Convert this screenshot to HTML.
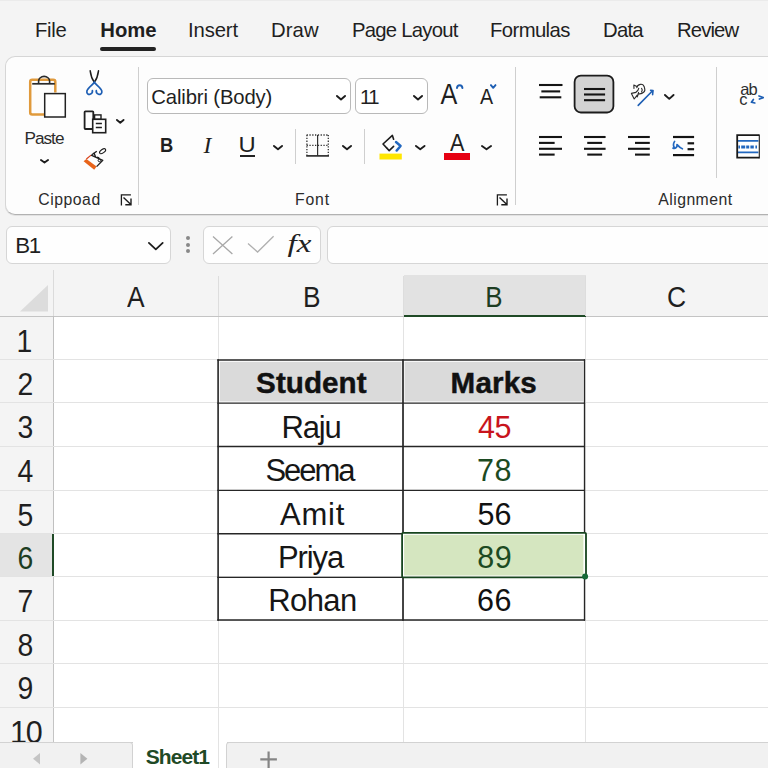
<!DOCTYPE html>
<html lang="en"><head><meta charset="utf-8"><title>Sheet</title>
<style>
html,body{margin:0;padding:0}
body{width:768px;height:768px;overflow:hidden;background:#f4f4f4;position:relative;font-family:"Liberation Sans",sans-serif;color:#1f1f1f}
.t{position:absolute;white-space:nowrap;line-height:1}
.i{position:absolute;overflow:visible}
.b{position:absolute;box-sizing:border-box}
</style></head><body>
<div class="b" style="left:0;top:0;width:768px;height:1px;background:#ebebeb"></div><div id="tabs"><span class="t" style="left:35.03px;top:20.00px;font-size:20.3px;letter-spacing:-0.282px;">File</span><span class="t" style="left:100.33px;top:20.00px;font-size:20.3px;letter-spacing:-0.018px;font-weight:700;">Home</span><span class="t" style="left:188.12px;top:20.00px;font-size:20.3px;letter-spacing:-0.144px;">Insert</span><span class="t" style="left:271.03px;top:20.00px;font-size:20.3px;letter-spacing:0.075px;">Draw</span><span class="t" style="left:352.03px;top:20.00px;font-size:20.3px;letter-spacing:-0.756px;">Page Layout</span><span class="t" style="left:490.03px;top:20.00px;font-size:20.3px;letter-spacing:-0.602px;">Formulas</span><span class="t" style="left:603.03px;top:20.00px;font-size:20.3px;letter-spacing:-0.736px;">Data</span><span class="t" style="left:677.03px;top:20.00px;font-size:20.3px;letter-spacing:-0.872px;">Review</span><div class="b" style="left:100px;top:46.5px;width:56px;height:4px;border-radius:2px;background:#222"></div></div>
<div class="b" id="ribbon" style="left:5px;top:56px;width:800px;height:158.8px;background:#fdfdfd;border:1px solid #d6d6d6;border-bottom:1px solid #b2b2b2;box-shadow:0 1px 0 #e2e2e2;border-radius:10px"></div>
<div class="b" style="left:137.5px;top:67px;width:1px;height:138px;background:#cfcfcf"></div><div class="b" style="left:514.5px;top:67px;width:1px;height:138px;background:#cfcfcf"></div><div class="b" style="left:716.0px;top:67px;width:1px;height:111px;background:#cfcfcf"></div><div class="b" style="left:295.0px;top:129px;width:1px;height:35px;background:#cfcfcf"></div><div class="b" style="left:364.0px;top:129px;width:1px;height:35px;background:#cfcfcf"></div><svg class="i" style="left:26px;top:72px" width="44" height="50" viewBox="26 72 44 50">
<path d="M44.6 114.6 H32.2 a2 2 0 0 1 -2 -2 V81.8 a2 2 0 0 1 2 -2 H53.3 a2 2 0 0 1 2 2 V92.4" fill="none" stroke="#e09a3c" stroke-width="2.5"/>
<line x1="32.2" y1="83.8" x2="54.8" y2="83.8" stroke="#2a2a2a" stroke-width="1.7"/>
<path d="M38.6 83.4 V81 a5.5 4.6 0 0 1 11 0 V83.4" fill="none" stroke="#2a2a2a" stroke-width="1.6"/>
<rect x="44.7" y="93.6" width="20.6" height="23.4" fill="#fff" stroke="#222" stroke-width="1.5"/>
</svg><span class="t" style="left:24.38px;top:130.00px;font-size:17.2px;letter-spacing:-0.961px;color:#2b2b2b;">Paste</span><svg class="i" style="left:38px;top:157px" width="13" height="8.400000000000006" viewBox="-2 -2 13 8.400000000000006"><polyline points="0.95,0.95 4.5,3.4500000000000055 8.05,0.95" fill="none" stroke="#1c1c1c" stroke-width="1.9" stroke-linecap="round" stroke-linejoin="round"/></svg><svg class="i" style="left:84px;top:68px" width="22" height="30" viewBox="84 68 22 30">
<path d="M90.2 70.8 C90.8 75.6 92.2 79.4 94.4 82.4 M98.5 70.8 C97.9 75.6 96.5 79.4 94.3 82.4" fill="none" stroke="#1c1c1c" stroke-width="1.5" stroke-linecap="round"/>
<path d="M94.2 82.2 C96.4 85.2 101 87.8 101.8 91 C102.3 93.5 100.2 94.8 98.6 94.3 C97 93.8 96 92.4 96.3 90.7" fill="none" stroke="#1e5fb4" stroke-width="1.7" stroke-linecap="round"/>
<path d="M94.5 82.2 C92.3 85.2 87.7 87.8 86.9 91 C86.4 93.5 88.5 94.8 90.1 94.3 C91.7 93.8 92.7 92.4 92.4 90.7" fill="none" stroke="#1e5fb4" stroke-width="1.7" stroke-linecap="round"/>
</svg><svg class="i" style="left:82px;top:108px" width="28" height="28" viewBox="82 108 28 28">
<rect x="84.6" y="111.3" width="8.7" height="17.7" rx="0.8" fill="none" stroke="#1f1f1f" stroke-width="1.8"/>
<rect x="94.6" y="114.9" width="6.4" height="4.4" fill="#fff" stroke="#1f1f1f" stroke-width="1.4"/>
<rect x="92.7" y="119.3" width="13" height="13.4" fill="#fff" stroke="#1f1f1f" stroke-width="1.6"/>
<path d="M95.8 123.5 H101.9 M95.8 127.5 H101.9" stroke="#1f1f1f" stroke-width="1.4"/>
</svg><svg class="i" style="left:113.5px;top:117.4px" width="12.5" height="8.599999999999994" viewBox="-2 -2 12.5 8.599999999999994"><polyline points="0.95,0.95 4.25,3.649999999999994 7.55,0.95" fill="none" stroke="#1c1c1c" stroke-width="1.9" stroke-linecap="round" stroke-linejoin="round"/></svg><svg class="i" style="left:82px;top:146px" width="28" height="26" viewBox="82 146 28 26">
<path d="M83.6 161.3 L86.4 159 L96.6 166.6 L94.2 169.7 Z" fill="#e8641a"/>
<path d="M86.4 159 L91.1 155.1" stroke="#d8401a" stroke-width="1.2" fill="none"/>
<path d="M91.1 155.1 L102.8 160.3 L96.6 166.6" stroke="#1f1f1f" stroke-width="1.3" fill="none" stroke-linejoin="round"/>
<path d="M91.8 154.8 L96.8 151.2 M93.8 152.6 L95.6 157 M97 157.2 L99.2 158" stroke="#1f1f1f" stroke-width="1.4" fill="none"/>
<circle cx="99.4" cy="160.4" r="1.3" fill="none" stroke="#1f1f1f" stroke-width="1"/>
<ellipse cx="102.6" cy="151.2" rx="3.5" ry="1.7" transform="rotate(-35 102.6 151.2)" fill="none" stroke="#1f1f1f" stroke-width="1.1"/>
</svg><span class="t" style="left:38.21px;top:192.00px;font-size:15.8px;letter-spacing:0.520px;color:#2b2b2b;">Cippoad</span><svg class="i" style="left:120px;top:194px" width="13" height="13" viewBox="0 0 13 13"><path d="M1.4 11.5 V0.8 H10.9" fill="none" stroke="#1c1c1c" stroke-width="1.3"/><path d="M3.5 3.4 L10.6 10.2 M11 4.5 V10.8 H5.3" fill="none" stroke="#1c1c1c" stroke-width="1.4"/></svg><svg class="i" style="left:496.4px;top:194px" width="13" height="13" viewBox="0 0 13 13"><path d="M1.4 11.5 V0.8 H10.9" fill="none" stroke="#1c1c1c" stroke-width="1.3"/><path d="M3.5 3.4 L10.6 10.2 M11 4.5 V10.8 H5.3" fill="none" stroke="#1c1c1c" stroke-width="1.4"/></svg><div class="b" style="left:146.5px;top:78px;width:204px;height:36px;border:1px solid #b9b9b9;border-radius:6px;background:#fff"></div><span class="t" style="left:151.29px;top:87.00px;font-size:20.3px;letter-spacing:-0.141px;">Calibri (Body)</span><svg class="i" style="left:334px;top:92.5px" width="14" height="9.5" viewBox="-2 -2 14 9.5"><polyline points="0.95,0.95 5.0,4.55 9.05,0.95" fill="none" stroke="#1c1c1c" stroke-width="1.9" stroke-linecap="round" stroke-linejoin="round"/></svg><div class="b" style="left:355px;top:78px;width:73px;height:36px;border:1px solid #b9b9b9;border-radius:6px;background:#fff"></div><span class="t" style="left:360.08px;top:87.00px;font-size:20.3px;letter-spacing:-1.575px;">11</span><svg class="i" style="left:410.5px;top:92.5px" width="14.0" height="9.5" viewBox="-2 -2 14.0 9.5"><polyline points="0.95,0.95 5.0,4.55 9.05,0.95" fill="none" stroke="#1c1c1c" stroke-width="1.9" stroke-linecap="round" stroke-linejoin="round"/></svg><span class="t" style="left:438.64px;top:79.00px;font-size:30px;transform:scaleX(0.840);transform-origin:10.01px 50%;">A</span><svg class="i" style="left:454px;top:81px" width="12" height="10" viewBox="454 81 12 10"><path d="M457 88 C457.2 84.2 462.2 84.2 462.4 88" fill="none" stroke="#1e5fb4" stroke-width="2" stroke-linecap="round"/></svg><span class="t" style="left:478.86px;top:86.00px;font-size:22.6px;transform:scaleX(0.868);transform-origin:7.54px 50%;">A</span><svg class="i" style="left:488px;top:81px" width="12" height="10" viewBox="488 81 12 10"><path d="M490.9 85.1 L493.2 87.8 L495.5 85.1" fill="none" stroke="#1e5fb4" stroke-width="1.9" stroke-linecap="round" stroke-linejoin="round"/></svg><span class="t" style="left:159.28px;top:134.00px;font-size:21px;font-weight:700;transform:scaleX(0.874);transform-origin:7.82px 50%;">B</span><span class="t" style="left:203.51px;top:134.00px;font-size:23.6px;font-style:italic;font-family:'Liberation Serif', serif;">I</span><span class="t" style="left:239.43px;top:134.00px;font-size:22.2px;transform:scaleX(1.072);transform-origin:8.02px 50%;">U</span><div class="b" style="left:240px;top:155.3px;width:14.8px;height:1.7px;background:#222"></div><svg class="i" style="left:271px;top:143.4px" width="14" height="9.199999999999989" viewBox="-2 -2 14 9.199999999999989"><polyline points="0.95,0.95 5.0,4.2499999999999885 9.05,0.95" fill="none" stroke="#1c1c1c" stroke-width="1.9" stroke-linecap="round" stroke-linejoin="round"/></svg><svg class="i" style="left:305px;top:133px" width="26" height="26" viewBox="305 133 26 26">
<path d="M306.6 135 H328.6 M306.9 135 V155.5 M328.3 135 V155.5 M306.6 145.4 H328.6" fill="none" stroke="#333" stroke-width="1.3" stroke-dasharray="1.3 1.5"/>
<path d="M317.6 135 V155.5" stroke="#333" stroke-width="1.2"/>
<path d="M306.2 155.9 H329" stroke="#222" stroke-width="1.6"/>
</svg><svg class="i" style="left:340px;top:143.4px" width="14" height="9.199999999999989" viewBox="-2 -2 14 9.199999999999989"><polyline points="0.95,0.95 5.0,4.2499999999999885 9.05,0.95" fill="none" stroke="#1c1c1c" stroke-width="1.9" stroke-linecap="round" stroke-linejoin="round"/></svg><svg class="i" style="left:378px;top:132px" width="26" height="30" viewBox="378 132 26 30">
<path d="M393.6 139.2 L392.4 135.4 L383 144 L389.2 150.6 L393.6 146.4" fill="none" stroke="#1c1c1c" stroke-width="1.6" stroke-linejoin="round" stroke-linecap="round"/>
<path d="M386.2 147.4 L387.6 148.6" stroke="#222" stroke-width="1.2"/>
<path d="M396 142 L400.6 146 L396.6 150.6" fill="none" stroke="#2268c0" stroke-width="2.4" stroke-linejoin="round" stroke-linecap="round"/>
<rect x="379.5" y="153.6" width="22.3" height="5.9" fill="#ffe600"/>
</svg><svg class="i" style="left:412.5px;top:143.4px" width="14.5" height="9.199999999999989" viewBox="-2 -2 14.5 9.199999999999989"><polyline points="0.95,0.95 5.25,4.2499999999999885 9.55,0.95" fill="none" stroke="#1c1c1c" stroke-width="1.9" stroke-linecap="round" stroke-linejoin="round"/></svg><span class="t" style="left:449.01px;top:131.00px;font-size:24.7px;transform:scaleX(0.874);transform-origin:8.24px 50%;">A</span><div class="b" style="left:444px;top:153.3px;width:25.5px;height:6.4px;background:#e60012"></div><svg class="i" style="left:479px;top:143.4px" width="15" height="9.199999999999989" viewBox="-2 -2 15 9.199999999999989"><polyline points="0.95,0.95 5.5,4.2499999999999885 10.05,0.95" fill="none" stroke="#1c1c1c" stroke-width="1.9" stroke-linecap="round" stroke-linejoin="round"/></svg><span class="t" style="left:295.00px;top:192.00px;font-size:15.8px;letter-spacing:0.841px;color:#2b2b2b;">Font</span><svg class="i" style="left:538.5px;top:82.6px" width="23.5" height="16.30000000000001" viewBox="0 0 23.5 16.30000000000001"><line x1="0.00" y1="2.00" x2="23.50" y2="2.00" stroke="#141414" stroke-width="2.1"/><line x1="2.35" y1="8.40" x2="21.15" y2="8.40" stroke="#141414" stroke-width="2.1"/><line x1="0.70" y1="14.30" x2="22.32" y2="14.30" stroke="#141414" stroke-width="2.1"/></svg><svg class="i" style="left:570px;top:71px" width="48" height="46" viewBox="570 71 48 46"><rect x="574.6" y="75.6" width="38.8" height="36.9" rx="6.3" fill="#d3d3d3" stroke="#1c1c1c" stroke-width="1.8"/></svg><svg class="i" style="left:583.7px;top:86.8px" width="21.09999999999991" height="15.200000000000003" viewBox="0 0 21.09999999999991 15.200000000000003"><line x1="0.00" y1="2.00" x2="21.10" y2="2.00" stroke="#141414" stroke-width="2.1"/><line x1="0.00" y1="7.50" x2="21.10" y2="7.50" stroke="#141414" stroke-width="2.1"/><line x1="0.00" y1="13.20" x2="21.10" y2="13.20" stroke="#141414" stroke-width="2.1"/></svg><svg class="i" style="left:628px;top:80px" width="28" height="28" viewBox="628 80 28 28">
<path d="M633.8 85 l3 1.6 M633.8 85 l0.2 3.4 M636.8 87.6 c0.6 -3.6 6.2 -4.8 7.4 -0.8 c0.9 2.6 1.5 3.8 -0.3 5.2 c-1.6 1.4 -3.8 2.4 -5.8 1.4 M638.8 88.2 c-0.4 2 -1.6 3.6 -3.2 4.4 M631.4 93.4 l4.6 -1 M631.4 93.4 l2.8 5.6 l3 -3.8 M638.6 92.4 c-0.6 1.6 -0.4 3.4 -1.4 4.4 M641.6 88.4 c0.8 1 0.8 2.4 0 3.4" fill="none" stroke="#2a2a2a" stroke-width="1.1" stroke-linecap="round" stroke-linejoin="round"/>
<path d="M638.2 105.4 L652.6 90.8" stroke="#1e5fb4" stroke-width="1.6" stroke-linecap="round"/>
<path d="M650.6 90.4 L653 90.6 L652.6 94.6" fill="none" stroke="#1e5fb4" stroke-width="1.6" stroke-linecap="round" stroke-linejoin="round"/>
</svg><svg class="i" style="left:661.5px;top:91.6px" width="14.5" height="9.800000000000011" viewBox="-2 -2 14.5 9.800000000000011"><polyline points="0.95,0.95 5.25,4.850000000000011 9.55,0.95" fill="none" stroke="#1c1c1c" stroke-width="1.9" stroke-linecap="round" stroke-linejoin="round"/></svg><svg class="i" style="left:538.5px;top:134.7px" width="23.0" height="21.600000000000023" viewBox="0 0 23.0 21.600000000000023"><line x1="0.00" y1="2.00" x2="23.00" y2="2.00" stroke="#141414" stroke-width="2.1"/><line x1="0.00" y1="7.90" x2="15.64" y2="7.90" stroke="#141414" stroke-width="2.1"/><line x1="0.00" y1="13.80" x2="23.00" y2="13.80" stroke="#141414" stroke-width="2.1"/><line x1="0.00" y1="19.60" x2="15.64" y2="19.60" stroke="#141414" stroke-width="2.1"/></svg><svg class="i" style="left:583.7px;top:134.7px" width="21.59999999999991" height="21.600000000000023" viewBox="0 0 21.59999999999991 21.600000000000023"><line x1="0.00" y1="2.00" x2="21.60" y2="2.00" stroke="#141414" stroke-width="2.1"/><line x1="3.24" y1="7.90" x2="18.14" y2="7.90" stroke="#141414" stroke-width="2.1"/><line x1="0.00" y1="13.80" x2="21.60" y2="13.80" stroke="#141414" stroke-width="2.1"/><line x1="3.24" y1="19.60" x2="18.14" y2="19.60" stroke="#141414" stroke-width="2.1"/></svg><svg class="i" style="left:627.5px;top:134.7px" width="21.799999999999955" height="21.600000000000023" viewBox="0 0 21.799999999999955 21.600000000000023"><line x1="0.00" y1="2.00" x2="21.80" y2="2.00" stroke="#141414" stroke-width="2.1"/><line x1="6.98" y1="7.90" x2="21.80" y2="7.90" stroke="#141414" stroke-width="2.1"/><line x1="0.00" y1="13.80" x2="21.80" y2="13.80" stroke="#141414" stroke-width="2.1"/><line x1="6.98" y1="19.60" x2="21.80" y2="19.60" stroke="#141414" stroke-width="2.1"/></svg><svg class="i" style="left:672.7px;top:134.7px" width="21.09999999999991" height="22.100000000000023" viewBox="0 0 21.09999999999991 22.100000000000023"><line x1="0.00" y1="2.00" x2="21.10" y2="2.00" stroke="#141414" stroke-width="2.2"/><line x1="14.56" y1="8.30" x2="21.10" y2="8.30" stroke="#141414" stroke-width="2.2"/><line x1="14.56" y1="14.20" x2="21.10" y2="14.20" stroke="#141414" stroke-width="2.2"/><line x1="0.00" y1="20.10" x2="21.10" y2="20.10" stroke="#141414" stroke-width="2.2"/></svg><svg class="i" style="left:670px;top:138px" width="16" height="14" viewBox="670 138 16 14"><path d="M674.6 141.4 C673.2 143.6 673.2 146.4 674.8 148.4 M673 148.2 C675.4 149.2 677.4 147 677 144.6 C678.6 146.4 680 148 682.4 148.8" fill="none" stroke="#2268c0" stroke-width="1.7" stroke-linecap="round" stroke-linejoin="round"/></svg><span class="t" style="left:658.26px;top:192.00px;font-size:15.8px;letter-spacing:0.448px;color:#2b2b2b;">Alignment</span><span class="t" style="left:740.20px;top:81.00px;font-size:16.5px;letter-spacing:-0.954px;color:#2e2e2e;">ab</span><span class="t" style="left:739.30px;top:91.00px;font-size:16.5px;color:#2e2e2e;">c</span><svg class="i" style="left:748px;top:92px" width="18" height="14" viewBox="748 92 18 14"><path d="M759 96 L763.2 97.6 L759.4 99" fill="none" stroke="#1e5fb4" stroke-width="1.7" stroke-linecap="round" stroke-linejoin="round"/><path d="M753.4 99.4 L751.4 102.2 L754.8 103" fill="none" stroke="#1e5fb4" stroke-width="1.7" stroke-linecap="round" stroke-linejoin="round"/></svg><svg class="i" style="left:734px;top:132px" width="30" height="30" viewBox="734 132 30 30">
<rect x="737.2" y="135.2" width="21.8" height="22.5" fill="#fff" stroke="none"/>
<path d="M738 140.8 H758.4 M738 152.3 H758.4" stroke="#2268c0" stroke-width="1.7"/>
<path d="M738.4 147.1 H758.2" stroke="#2268c0" stroke-width="3" stroke-dasharray="1.6 1.2 4 1 3 1.2 3.4 1.6 1.6 9"/>
<path d="M759.2 135.2 H737.2 V157.7 H759.2" fill="none" stroke="#1a1a1a" stroke-width="1.8" stroke-linejoin="miter"/>
<path d="M759.3 134.4 V158.6" stroke="#1a1a1a" stroke-width="1.1"/>
</svg>
<div class="b" style="left:6px;top:226px;width:165px;height:38.4px;border:1px solid #d6d6d6;border-radius:6px;background:#fefefe"></div><span class="t" style="left:15.36px;top:235.00px;font-size:22.3px;letter-spacing:-1.563px;">B1</span><svg class="i" style="left:145.8px;top:239.8px" width="19.599999999999994" height="12.199999999999989" viewBox="-2 -2 19.599999999999994 12.199999999999989"><polyline points="0.9,0.9 7.799999999999997,7.299999999999988 14.699999999999994,0.9" fill="none" stroke="#1c1c1c" stroke-width="1.8" stroke-linecap="round" stroke-linejoin="round"/></svg><div class="b" style="left:185.6px;top:236.20000000000002px;width:4.3px;height:4.3px;border-radius:50%;background:#888"></div><div class="b" style="left:185.6px;top:242.70000000000002px;width:4.3px;height:4.3px;border-radius:50%;background:#888"></div><div class="b" style="left:185.6px;top:249.20000000000002px;width:4.3px;height:4.3px;border-radius:50%;background:#888"></div><div class="b" style="left:202.5px;top:226px;width:118.5px;height:38.4px;border:1px solid #d6d6d6;border-radius:6px;background:#fefefe"></div><svg class="i" style="left:210px;top:234px" width="68" height="22" viewBox="210 234 68 22"><path d="M213 236.4 L232.4 254 M232.4 236.4 L213 254" stroke="#a8a8a8" stroke-width="1.3" fill="none"/><path d="M248 243.4 L257.6 252 L273.6 236.2" stroke="#b0b0b0" stroke-width="1.3" fill="none"/></svg><span class="t" style="left:290.12px;top:231.00px;font-size:26px;font-style:italic;font-family:'Liberation Serif', serif;color:#222;transform:scaleX(1.271);transform-origin:9.43px 50%;">fx</span><div class="b" style="left:327px;top:226px;width:460px;height:38.4px;border:1px solid #d6d6d6;border-radius:6px;background:#fefefe"></div>
<div class="b" id="grid" style="left:53px;top:316px;width:715px;height:426px;background:#fff"></div><div class="b" style="left:403.5px;top:275px;width:182px;height:42px;background:#e2e2e2;border-bottom:2px solid #1f4a26"></div><div class="b" style="left:0;top:533.5px;width:54px;height:43.5px;background:#e4e4e4;border-right:2px solid #1f4a26"></div><div class="b" style="left:218.0px;top:276px;width:1px;height:40px;background:#dddddd"></div><div class="b" style="left:402.5px;top:276px;width:1px;height:40px;background:#dddddd"></div><div class="b" style="left:585.0px;top:276px;width:1px;height:40px;background:#dddddd"></div><div class="b" style="left:0;top:315.5px;width:403.5px;height:1.3px;background:#c4c4c4"></div><div class="b" style="left:585.5px;top:315.5px;width:183px;height:1.3px;background:#c4c4c4"></div><div class="b" style="left:52.5px;top:270px;width:1.3px;height:46px;background:#dbdbdb"></div><div class="b" style="left:52.5px;top:316px;width:1.3px;height:217.5px;background:#c0c0c0"></div><div class="b" style="left:52.5px;top:577px;width:1.3px;height:165px;background:#c4c4c4"></div><div class="b" style="left:0;top:358.7px;width:768px;height:1px;background:#e3e3e3"></div><div class="b" style="left:0;top:402.2px;width:768px;height:1px;background:#e3e3e3"></div><div class="b" style="left:0;top:445.7px;width:768px;height:1px;background:#e3e3e3"></div><div class="b" style="left:0;top:489.7px;width:768px;height:1px;background:#e3e3e3"></div><div class="b" style="left:0;top:532.7px;width:768px;height:1px;background:#e3e3e3"></div><div class="b" style="left:0;top:576.2px;width:768px;height:1px;background:#e3e3e3"></div><div class="b" style="left:0;top:619.7px;width:768px;height:1px;background:#e3e3e3"></div><div class="b" style="left:0;top:663.2px;width:768px;height:1px;background:#e3e3e3"></div><div class="b" style="left:0;top:706.7px;width:768px;height:1px;background:#e3e3e3"></div><div class="b" style="left:218.0px;top:317px;width:1px;height:425px;background:#e3e3e3"></div><div class="b" style="left:402.5px;top:317px;width:1px;height:425px;background:#e3e3e3"></div><div class="b" style="left:585.0px;top:317px;width:1px;height:425px;background:#e3e3e3"></div><svg class="i" style="left:20px;top:285px" width="28" height="27" viewBox="0 0 28 27"><path d="M28 0 V26.5 H0 Z" fill="#dcdcdc"/></svg><span class="t" style="left:126.40px;top:282.00px;font-size:29.5px;transform:scaleX(0.895);transform-origin:9.85px 50%;">A</span><span class="t" style="left:301.91px;top:282.00px;font-size:29.5px;transform:scaleX(0.891);transform-origin:10.29px 50%;">B</span><span class="t" style="left:484.21px;top:282.00px;font-size:29.5px;color:#1d3d22;transform:scaleX(0.878);transform-origin:10.29px 50%;">B</span><span class="t" style="left:665.56px;top:282.00px;font-size:29.5px;transform:scaleX(0.897);transform-origin:10.84px 50%;">C</span><span class="t" style="left:15.92px;top:326.00px;font-size:30.5px;transform:scaleX(0.930);transform-origin:8.88px 50%;">1</span><span class="t" style="left:16.64px;top:369.00px;font-size:30.5px;transform:scaleX(0.930);transform-origin:8.46px 50%;">2</span><span class="t" style="left:16.81px;top:412.00px;font-size:30.5px;transform:scaleX(0.930);transform-origin:8.39px 50%;">3</span><span class="t" style="left:16.71px;top:456.00px;font-size:30.5px;transform:scaleX(0.930);transform-origin:8.39px 50%;">4</span><span class="t" style="left:16.84px;top:500.00px;font-size:30.5px;transform:scaleX(0.930);transform-origin:8.46px 50%;">5</span><span class="t" style="left:16.72px;top:543.00px;font-size:30.5px;color:#1d3d22;transform:scaleX(0.930);transform-origin:8.58px 50%;">6</span><span class="t" style="left:16.84px;top:586.00px;font-size:30.5px;transform:scaleX(0.930);transform-origin:8.46px 50%;">7</span><span class="t" style="left:16.84px;top:630.00px;font-size:30.5px;transform:scaleX(0.930);transform-origin:8.46px 50%;">8</span><span class="t" style="left:16.80px;top:673.00px;font-size:30.5px;transform:scaleX(0.930);transform-origin:8.50px 50%;">9</span><span class="t" style="left:9.91px;top:717.00px;font-size:30.5px;letter-spacing:-1.224px;">10</span>
<svg class="i" id="tbl" style="left:210px;top:350px" width="390" height="280" viewBox="210 350 390 280"><rect x="217.4" y="359.3" width="367.8" height="44" fill="#fff"/><rect x="219.8" y="361.8" width="181.7" height="39.6" fill="#dadada"/><rect x="404.6" y="361.8" width="178.7" height="39.6" fill="#dadada"/><line x1="217.3" y1="360" x2="585.1" y2="360" stroke="#262626" stroke-width="1.6"/><line x1="217.3" y1="403.1" x2="585.1" y2="403.1" stroke="#262626" stroke-width="1.4"/><line x1="217.3" y1="446.5" x2="585.1" y2="446.5" stroke="#262626" stroke-width="1.4"/><line x1="217.3" y1="490.4" x2="585.1" y2="490.4" stroke="#262626" stroke-width="1.4"/><line x1="217.3" y1="533.75" x2="585.1" y2="533.75" stroke="#262626" stroke-width="1.3"/><line x1="217.3" y1="577.3" x2="585.1" y2="577.3" stroke="#262626" stroke-width="1.3"/><line x1="217.3" y1="620" x2="585.1" y2="620" stroke="#262626" stroke-width="1.4"/><line x1="218.1" y1="359.2" x2="218.1" y2="620.7" stroke="#262626" stroke-width="1.6"/><line x1="403" y1="359.2" x2="403" y2="620.7" stroke="#262626" stroke-width="1.7"/><line x1="584.5" y1="359.2" x2="584.5" y2="620.7" stroke="#262626" stroke-width="1.3"/><rect x="402.1" y="532.8" width="183.9" height="44.6" rx="1" fill="#fff" stroke="#17451f" stroke-width="1.8"/><rect x="404.1" y="534.8" width="179.3" height="40.7" fill="#d5e6c0"/><circle cx="585.1" cy="576.5" r="3" fill="#156a38"/></svg><span class="t" style="left:256.11px;top:368.00px;font-size:29.6px;letter-spacing:0.045px;font-weight:700;color:#111;-webkit-text-stroke:0.45px #111;">Student</span><span class="t" style="left:450.60px;top:368.00px;font-size:29.6px;letter-spacing:0.159px;font-weight:700;color:#111;-webkit-text-stroke:0.45px #111;">Marks</span><span class="t" style="left:281.44px;top:412.00px;font-size:31px;letter-spacing:-1.111px;color:#161616;">Raju</span><span class="t" style="left:477.91px;top:412.00px;font-size:30.5px;letter-spacing:-0.349px;color:#c8141c;">45</span><span class="t" style="left:265.41px;top:455.00px;font-size:31px;letter-spacing:-2.019px;color:#161616;">Seema</span><span class="t" style="left:477.08px;top:455.00px;font-size:30.5px;letter-spacing:0.566px;color:#1c4a22;">78</span><span class="t" style="left:279.92px;top:499.00px;font-size:31px;letter-spacing:0.837px;color:#161616;">Amit</span><span class="t" style="left:477.38px;top:499.00px;font-size:30.5px;letter-spacing:0.261px;color:#111;">56</span><span class="t" style="left:277.94px;top:542.00px;font-size:31px;letter-spacing:-1.106px;color:#161616;">Priya</span><span class="t" style="left:477.30px;top:542.00px;font-size:30.5px;letter-spacing:0.414px;color:#1c4a22;">89</span><span class="t" style="left:268.34px;top:585.00px;font-size:31px;letter-spacing:-0.625px;color:#161616;">Rohan</span><span class="t" style="left:477.08px;top:585.00px;font-size:30.5px;letter-spacing:0.566px;color:#111;">66</span>
<div class="b" style="left:0;top:741.5px;width:768px;height:30px;background:#f2f2f2;border-top:1.3px solid #cfcfcf"></div><div class="b" style="left:-10px;top:741.5px;width:142.5px;height:40px;background:#f1f1f1;border:1.3px solid #d2d2d2;border-radius:0 3px 0 0"></div><div class="b" style="left:132.5px;top:741px;width:94px;height:30px;background:#fff"></div><div class="b" style="left:218px;top:741px;width:1px;height:30px;background:#e3e3e3"></div><div class="b" style="left:226.4px;top:741.5px;width:600px;height:40px;background:#f1f1f1;border:1.3px solid #d2d2d2;border-radius:3px 0 0 0"></div><svg class="i" style="left:30px;top:750px" width="60" height="18" viewBox="30 750 60 18"><path d="M40 753 V764.4 L33 758.7 Z" fill="#c4c4c4"/><path d="M80.4 753 V764.4 L87.4 758.7 Z" fill="#b4b4b4"/></svg><span class="t" style="left:145.77px;top:746.00px;font-size:21px;letter-spacing:-0.924px;font-weight:700;color:#1f4a26;">Sheet1</span><svg class="i" style="left:258px;top:748px" width="20" height="20" viewBox="258 748 20 20"><path d="M268.6 751.4 V768 M260.3 759.4 H276.9" stroke="#858585" stroke-width="2.2" fill="none"/></svg>
</body></html>
